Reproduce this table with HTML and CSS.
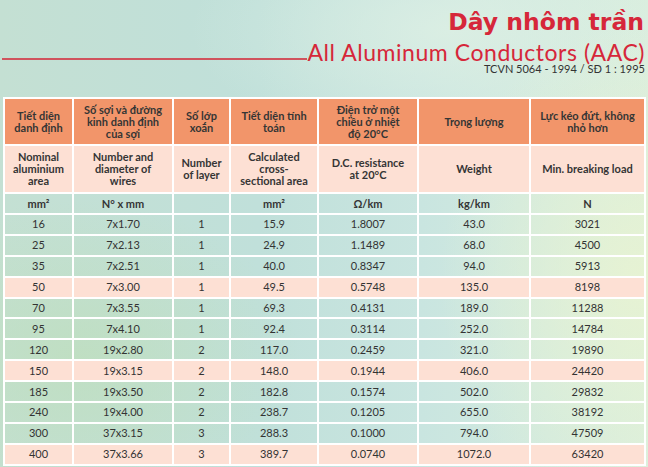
FILE: index.html
```html
<!DOCTYPE html>
<html>
<head>
<meta charset="utf-8">
<link rel="stylesheet" href="styles.css">
</head>
<body>
<div class="page">
  <header class="head">
    <div class="title-vn">Dây nhôm trần</div>
    <div class="title-en-row">
      <span class="rule"></span>
      <span class="title-en">All Aluminum Conductors (AAC)</span>
    </div>
    <div class="std">TCVN 5064 - 1994 / SĐ 1 : 1995</div>
  </header>
  <table class="spec">
    <colgroup>
      <col class="c1"><col class="c2"><col class="c3"><col class="c4"><col class="c5"><col class="c6"><col class="c7">
    </colgroup>
    <thead>
      <tr class="vn">
        <th>Tiết diện<br>danh định</th>
        <th>Số sợi và đường<br>kinh danh định<br>của sợi</th>
        <th>Số lớp<br>xoắn</th>
        <th>Tiết diện tính<br>toán</th>
        <th>Điện trở một<br>chiều ở nhiệt<br>độ 20°C</th>
        <th>Trọng lượng</th>
        <th>Lực kéo đứt, không<br>nhỏ hơn</th>
      </tr>
      <tr class="en">
        <th>Nominal<br>aluminium<br>area</th>
        <th>Number and<br>diameter of<br>wires</th>
        <th>Number<br>of layer</th>
        <th>Calculated<br>cross-<br>sectional area</th>
        <th>D.C. resistance<br>at 20°C</th>
        <th>Weight</th>
        <th>Min. breaking load</th>
      </tr>
      <tr class="unit">
        <th>mm²</th>
        <th>N° x mm</th>
        <th></th>
        <th>mm²</th>
        <th>Ω/km</th>
        <th>kg/km</th>
        <th>N</th>
      </tr>
    </thead>
    <tbody>
      <tr><td>16</td><td>7x1.70</td><td>1</td><td>15.9</td><td>1.8007</td><td>43.0</td><td>3021</td></tr>
      <tr><td>25</td><td>7x2.13</td><td>1</td><td>24.9</td><td>1.1489</td><td>68.0</td><td>4500</td></tr>
      <tr><td>35</td><td>7x2.51</td><td>1</td><td>40.0</td><td>0.8347</td><td>94.0</td><td>5913</td></tr>
      <tr class="hl"><td>50</td><td>7x3.00</td><td>1</td><td>49.5</td><td>0.5748</td><td>135.0</td><td>8198</td></tr>
      <tr><td>70</td><td>7x3.55</td><td>1</td><td>69.3</td><td>0.4131</td><td>189.0</td><td>11288</td></tr>
      <tr><td>95</td><td>7x4.10</td><td>1</td><td>92.4</td><td>0.3114</td><td>252.0</td><td>14784</td></tr>
      <tr><td>120</td><td>19x2.80</td><td>2</td><td>117.0</td><td>0.2459</td><td>321.0</td><td>19890</td></tr>
      <tr class="hl"><td>150</td><td>19x3.15</td><td>2</td><td>148.0</td><td>0.1944</td><td>406.0</td><td>24420</td></tr>
      <tr><td>185</td><td>19x3.50</td><td>2</td><td>182.8</td><td>0.1574</td><td>502.0</td><td>29832</td></tr>
      <tr><td>240</td><td>19x4.00</td><td>2</td><td>238.7</td><td>0.1205</td><td>655.0</td><td>38192</td></tr>
      <tr><td>300</td><td>37x3.15</td><td>3</td><td>288.3</td><td>0.1000</td><td>794.0</td><td>47509</td></tr>
      <tr class="hl"><td>400</td><td>37x3.66</td><td>3</td><td>389.7</td><td>0.0740</td><td>1072.0</td><td>63420</td></tr>
    </tbody>
  </table>
</div>
</body>
</html>
```

FILE: styles.css
```css
html, body {
  margin: 0;
  padding: 0;
}
body {
  width: 648px;
  height: 467px;
  overflow: hidden;
  font-family: "Lato", "DejaVu Sans", sans-serif;
  color: #333;
  background:
    radial-gradient(ellipse 220px 160px at 80px 360px, rgba(190, 222, 186, 0.7), rgba(190, 222, 186, 0) 100%),
    radial-gradient(ellipse 200px 260px at 640px 280px, rgba(232, 243, 210, 0.9), rgba(232, 243, 210, 0) 100%),
    radial-gradient(ellipse 260px 120px at 450px 30px, rgba(222, 240, 228, 0.8), rgba(222, 240, 228, 0) 100%),
    linear-gradient(90deg, #c4e0d3 0%, #c0e0da 40%, #c9e5e0 65%, #d9eede 100%);
}
.page {
  padding: 9px 3px 0 3px;
}
.head {
  display: flex;
  flex-direction: column;
  align-items: stretch;
}
.title-vn {
  align-self: flex-end;
  color: #d6273a;
  font-family: "DejaVu Sans", "Lato", sans-serif;
  font-weight: 700;
  font-size: 23.5px;
  line-height: 26px;
  margin-right: 1px;
}
.title-en-row {
  display: flex;
  align-items: flex-end;
  height: 26px;
  margin-left: -1px;
}
.rule {
  flex: 1;
  border-bottom: 2px solid #d0535d;
  margin-bottom: 1px;
}
.title-en {
  color: #d6273a;
  font-size: 23px;
  line-height: 18px;
  letter-spacing: 0.55px;
}
.std {
  align-self: flex-end;
  font-size: 11px;
  line-height: 12px;
  color: #333;
  margin-top: 2px;
}
.spec {
  margin-top: 22px;
  width: 641px;
  border-collapse: collapse;
  table-layout: fixed;
  text-align: center;
}
.c1 { width: 69px; }
.c2 { width: 100px; }
.c3 { width: 57px; }
.c4 { width: 88px; }
.c5 { width: 100px; }
.c6 { width: 112px; }
.c7 { width: 115px; }
.spec th, .spec td {
  border: 2px solid #ffffff;
  padding: 0 2px;
}
.spec th {
  font-weight: 700;
  font-size: 11px;
  line-height: 12px;
  color: #353535;
}
.vn th {
  background: #f2956a;
  height: 45px;
}
.en th {
  background: #fde0d4;
  height: 46px;
}
.unit th {
  height: 19px;
}
.spec td {
  font-size: 11px;
  height: 18.9px;
  line-height: 12px;
  color: #333;
}
.hl td {
  background: #fde0d4;
}
```
